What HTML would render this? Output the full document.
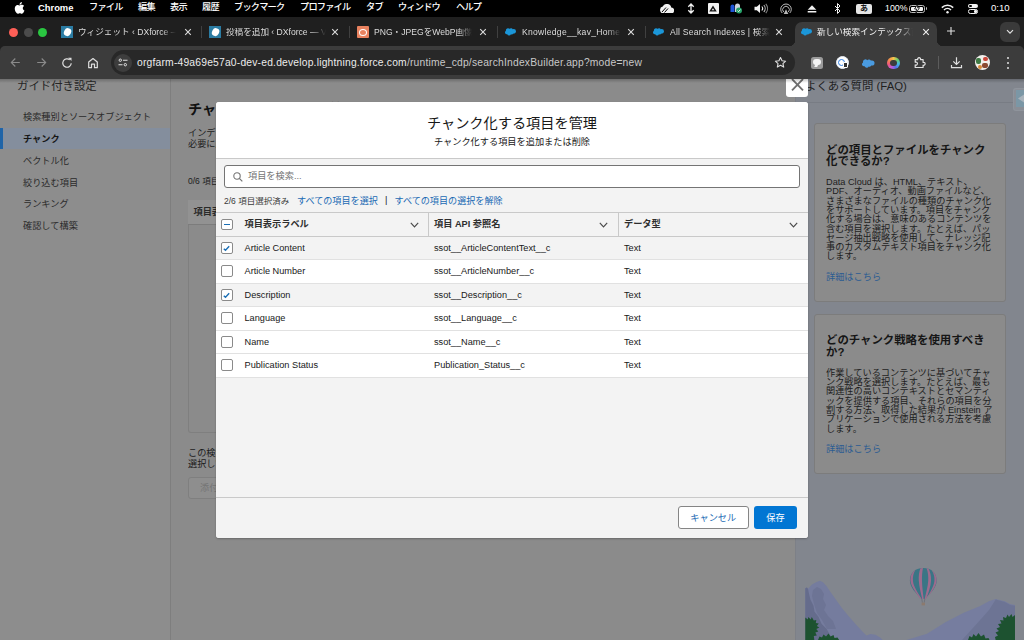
<!DOCTYPE html>
<html lang="ja">
<head>
<meta charset="utf-8">
<title>新しい検索インデックス設定</title>
<style>
*{box-sizing:border-box;margin:0;padding:0}
html,body{width:1024px;height:640px;overflow:hidden;background:#8b8b8b}
body{font-family:"Liberation Sans","Noto Sans CJK JP",sans-serif;font-size:9.2px;color:#181818;position:relative}
.abs{position:absolute}
.t{position:absolute;white-space:nowrap;line-height:1}
/* ---------- mac menu bar ---------- */
#menubar{position:absolute;left:0;top:0;width:1024px;height:17px;background:#000;color:#fff}
#menubar .t{font-size:9.2px;top:3.2px;color:#fff;letter-spacing:-0.8px;font-weight:500}
/* ---------- chrome tab strip ---------- */
#tabstrip{position:absolute;left:0;top:17px;width:1024px;height:40px;background:#1f1f1f}
#tabstrip .tt{position:absolute;top:10.700px;height:10px;-webkit-mask-image:linear-gradient(to right,#000 calc(100% - 14px),transparent);mask-image:linear-gradient(to right,#000 calc(100% - 14px),transparent);font-size:8.6px;color:#dcdcdc;white-space:nowrap;line-height:1;overflow:hidden}
#tabstrip .sep{position:absolute;top:9px;width:1px;height:12px;background:#404040}
#tabstrip .x{position:absolute;top:11px;width:8px;height:8px}
/* ---------- chrome toolbar ---------- */
#toolbar{position:absolute;left:0;top:46px;width:1024px;height:33px;background:#3c3c3c;border-radius:5px 5px 0 0}
#omni{position:absolute;left:111px;top:4px;width:684px;height:25px;border-radius:12.5px;background:#282828}
/* ---------- page ---------- */
#page{position:absolute;left:0;top:79px;width:1024px;height:561px;background:#8b8b8b;overflow:hidden}
#side{position:absolute;left:0;top:0;width:171px;height:561px;background:#8d8d8d;border-right:1px solid #7e7e7e}
#side .t{font-size:9.2px;color:#2b2b2b;left:23px}
#right{position:absolute;left:795px;top:0;width:229px;height:561px;background:#82868e;border-left:1px solid #7d8087}
.card{position:absolute;left:18px;width:192px;background:#8b8b8b;border:1px solid #7c7c7c;border-radius:3px}
.card h3{position:absolute;left:11px;font-size:11.4px;line-height:11.5px;font-weight:bold;color:#161616}
.card p{position:absolute;left:11px;font-size:9.2px;line-height:9.28px;color:#1d1d1d;white-space:nowrap}
.card a{position:absolute;left:11px;font-size:9.2px;line-height:1;color:#2c5c92;text-decoration:none}
/* ---------- modal ---------- */
#modal{position:absolute;left:216px;top:102px;width:592px;height:436px;background:#f3f3f3;border-radius:3px;overflow:hidden;box-shadow:0 1px 2px rgba(0,0,0,.25)}
#mhead{position:absolute;left:0;top:0;width:592px;height:57px;background:#fff;border-bottom:1px solid #c9c9c9}
#mfoot{position:absolute;left:0;top:394.500px;width:592px;height:41.500px;border-top:1px solid #c9c9c9;background:#f3f3f3}
.row{position:absolute;left:0;width:592px;height:23.5px;border-bottom:1px solid #e1e1e1;background:#fff}
.row.sel{background:#f3f3f3}
.row .t{top:7.300px;font-size:9.2px;color:#181818}
.cb{position:absolute;left:5.300px;top:5px;width:11.700px;height:11.700px;border:1px solid #8a8a8a;border-radius:2px;background:#fff}
</style>
</head>
<body>

<!-- ================= macOS menu bar ================= -->
<div id="menubar">
  <svg class="abs" style="left:14px;top:2px" width="11" height="12" viewBox="0 0 22 26"><path fill="#fff" d="M18.1 13.8c0-3.300 2.700-4.900 2.800-5-1.500-2.200-3.900-2.500-4.700-2.600-2-.2-3.900 1.200-4.900 1.200s-2.600-1.200-4.200-1.100c-2.200 0-4.200 1.300-5.300 3.200-2.300 3.900-.6 9.700 1.600 12.900 1.100 1.600 2.400 3.300 4.100 3.200 1.600-.1 2.300-1.100 4.200-1.100s2.500 1.100 4.300 1c1.800 0 2.900-1.600 4-3.200 1.200-1.800 1.700-3.600 1.800-3.700-.1 0-3.600-1.400-3.700-5.200zM14.800 4.100c.9-1.100 1.500-2.600 1.300-4.100-1.300.1-2.800.9-3.700 1.900-.8.900-1.500 2.400-1.300 3.900 1.400.1 2.800-.7 3.700-1.700z"/></svg>
  <span class="t" style="left:38px;font-weight:bold;letter-spacing:0;font-size:9.400px">Chrome</span>
  <span class="t" style="left:89px">ファイル</span>
  <span class="t" style="left:138px">編集</span>
  <span class="t" style="left:170px">表示</span>
  <span class="t" style="left:202px">履歴</span>
  <span class="t" style="left:234px">ブックマーク</span>
  <span class="t" style="left:300px">プロファイル</span>
  <span class="t" style="left:366px">タブ</span>
  <span class="t" style="left:398px">ウィンドウ</span>
  <span class="t" style="left:456px">ヘルプ</span>
  <span class="t" style="left:885px;top:4px;font-size:8.8px;letter-spacing:0">100%</span>
  <span class="t" style="left:991px;font-size:9.600px;letter-spacing:0;top:3.200px">0:10</span>
  <svg class="abs" style="left:658.500px;top:3.500px" width="15.500" height="9.500" viewBox="0 0 31 19"><path fill="#f2f2f2" d="M9 19a7 7 0 0 1-1.500-13.800A9 9 0 0 1 24.500 7 6 6 0 0 1 24 19z"/><path d="M6 16L14 7M11 17l7-8" stroke="#000" stroke-width="2" fill="none"/></svg>
  <svg class="abs" style="left:687px;top:3px" width="8" height="11" viewBox="0 0 8 11"><path d="M4 1.500v8M1.300 3.800L4 1l2.700 2.800M1.300 7.200L4 10l2.700-2.800" stroke="#f2f2f2" stroke-width="1.300" fill="none"/></svg>
  <div class="abs" style="left:707.500px;top:3px;width:11.500px;height:11px;background:#f2f2f2;border-radius:1px"><svg class="abs" style="left:1.700px;top:2px" width="8" height="7" viewBox="0 0 7 6"><path d="M3.500 0.300L6.800 5.700H0.200z" fill="#111"/><path d="M3.500 2.800L4.600 4.600H2.400z" fill="#f2f2f2"/></svg></div>
  <svg class="abs" style="left:730px;top:3px" width="13" height="11" viewBox="0 0 13 11"><path d="M0.500 9V3.500a2 2 0 0 1 4 0V9z" fill="#1f55d8"/><path d="M5 9V3a2.200 2.200 0 0 1 5 0v6z" fill="#cfd4dc"/><circle cx="9" cy="7.500" r="3" fill="#26a269"/><path d="M7.600 7.600l1 1 1.800-2" stroke="#fff" stroke-width=".9" fill="none"/></svg>
  <svg class="abs" style="left:753.500px;top:3px" width="15" height="11" viewBox="0 0 15 11"><path d="M0.500 3.700h2.300L6 1v9L2.800 7.300H0.500z" fill="#f2f2f2"/><path d="M7.800 3.500a3 3 0 0 1 0 4" stroke="#f2f2f2" stroke-width="1.100" fill="none"/><path d="M9.800 2a5.200 5.200 0 0 1 0 7" stroke="#bdbdbd" stroke-width="1.100" fill="none"/><path d="M11.800 0.800a7.300 7.300 0 0 1 0 9.400" stroke="#8a8a8a" stroke-width="1.100" fill="none"/></svg>
  <svg class="abs" style="left:780px;top:2.500px" width="12" height="12" viewBox="0 0 12 12"><path d="M2.200 10A5.300 5.300 0 1 1 9.800 10" stroke="#b8b8b8" stroke-width="1" fill="none"/><path d="M3.700 9A3.300 3.300 0 1 1 8.300 9" stroke="#b8b8b8" stroke-width="1" fill="none"/><path d="M6 6.200L8.300 11H3.700z" fill="#b8b8b8"/></svg>
  <svg class="abs" style="left:807px;top:4.500px" width="10" height="8" viewBox="0 0 10 8"><path d="M5 0.300L9.300 4.800H0.700z" fill="#f2f2f2"/><rect x="0.700" y="6" width="8.600" height="1.500" fill="#f2f2f2"/></svg>
  <svg class="abs" style="left:833.500px;top:3px" width="7" height="11" viewBox="0 0 7 11"><path d="M1 3l5 5-2.500 2.500V0.500L6 3 1 8" stroke="#f2f2f2" stroke-width="1" fill="none"/></svg>
  <div class="abs" style="left:856px;top:3.500px;width:16px;height:10.500px;background:#e6e6e6;border-radius:2px;color:#111;font-size:8px;line-height:10.500px;text-align:center;font-weight:bold">あ</div>
  <div class="abs" style="left:909px;top:4.500px;width:16px;height:8px;border:1px solid #bdbdbd;border-radius:2.500px"><div class="abs" style="left:1px;top:1px;width:12px;height:4px;background:#f2f2f2;border-radius:1px"></div><svg class="abs" style="left:4px;top:-1.500px" width="6" height="9" viewBox="0 0 6 9"><path d="M3.800 0L0.500 5h2L2 9l3.500-5.300h-2z" fill="#f2f2f2" stroke="#000" stroke-width=".8"/></svg></div>
  <div class="abs" style="left:925.500px;top:7px;width:1.500px;height:3px;background:#bdbdbd;border-radius:0 1px 1px 0"></div>
  <svg class="abs" style="left:940.500px;top:3.500px" width="13" height="10" viewBox="0 0 13 10"><path d="M0.800 3.600a8 8 0 0 1 11.400 0" stroke="#f2f2f2" stroke-width="1.500" fill="none"/><path d="M3 6a5 5 0 0 1 7 0" stroke="#f2f2f2" stroke-width="1.500" fill="none"/><circle cx="6.500" cy="8.300" r="1.200" fill="#f2f2f2"/></svg>
  <div class="abs" style="left:968px;top:3.500px;width:10px;height:4.500px;border-radius:2.300px;background:#f2f2f2"><div class="abs" style="left:1px;top:1px;width:2.500px;height:2.500px;border-radius:50%;background:#000"></div></div>
  <div class="abs" style="left:968px;top:9px;width:10px;height:4.500px;border-radius:2.300px;border:1px solid #f2f2f2"><div class="abs" style="left:5px;top:0;width:2.500px;height:2.500px;border-radius:50%;background:#f2f2f2"></div></div>
</div>

<!-- ================= Chrome tab strip ================= -->
<div id="tabstrip">
  <div class="abs" style="left:8.5px;top:10.500px;width:9px;height:9px;border-radius:50%;background:#fe5f57"></div><div class="abs" style="left:23.5px;top:10.500px;width:9px;height:9px;border-radius:50%;background:#4b4b4b"></div><div class="abs" style="left:37.5px;top:10.500px;width:9px;height:9px;border-radius:50%;background:#2ac641"></div>
  <div class="abs" style="left:61px;top:9px;width:12px;height:12px;background:#2b7ca3"><div class="abs" style="left:2.700px;top:1.800px;width:6.600px;height:8.400px;border-radius:50%;background:#fff;transform:rotate(28deg)"></div></div>
  <span class="tt" style="left:78px;width:98px">ウィジェット ‹ DXforce —</span>
  <svg class="x" style="left:183.5px" viewBox="0 0 8 8"><path d="M1.2 1.2L6.8 6.8M6.8 1.2L1.2 6.8" stroke="#dcdcdc" stroke-width="1.1" fill="none"/></svg>
  <div class="sep" style="left:201px"></div>
  <div class="abs" style="left:209px;top:9px;width:12px;height:12px;background:#2b7ca3"><div class="abs" style="left:2.700px;top:1.800px;width:6.600px;height:8.400px;border-radius:50%;background:#fff;transform:rotate(28deg)"></div></div>
  <span class="tt" style="left:226px;width:100px">投稿を追加 ‹ DXforce — V</span>
  <svg class="x" style="left:331px" viewBox="0 0 8 8"><path d="M1.2 1.2L6.8 6.8M6.8 1.2L1.2 6.8" stroke="#dcdcdc" stroke-width="1.1" fill="none"/></svg>
  <div class="sep" style="left:349px"></div>
  <div class="abs" style="left:357px;top:9px;width:12px;height:12px;background:#e8825f;border-radius:1px"><div class="abs" style="left:2px;top:2.5px;width:8px;height:7px;border-radius:50%;border:1.3px solid #fff"></div></div>
  <span class="tt" style="left:374px;width:98px">PNG・JPEGをWebP画像に</span>
  <svg class="x" style="left:479px" viewBox="0 0 8 8"><path d="M1.2 1.2L6.8 6.8M6.8 1.2L1.2 6.8" stroke="#dcdcdc" stroke-width="1.1" fill="none"/></svg>
  <div class="sep" style="left:497px"></div>
  <svg class="abs" style="left:505.0px;top:11.200px" width="11" height="7.600" viewBox="0 0 26 18"><path fill="#1b96d8" d="M10.800 2.000a4.700 4.700 0 0 1 7.500 1.000 5.700 5.700 0 0 1 2.300-.5 5.400 5.400 0 0 1 0 10.900 5.000 5.000 0 0 1-1.100-.1 4.100 4.100 0 0 1-5.400 1.700 4.800 4.800 0 0 1-8.800-.2 4.300 4.300 0 0 1-.9.1A4.400 4.400 0 0 1 2.200 6.700 5.100 5.100 0 0 1 10.800 2.000z"/></svg>
  <span class="tt" style="left:522px;width:99px;letter-spacing:.27px">Knowledge__kav_Home |</span>
  <svg class="x" style="left:627px" viewBox="0 0 8 8"><path d="M1.2 1.2L6.8 6.8M6.8 1.2L1.2 6.8" stroke="#dcdcdc" stroke-width="1.1" fill="none"/></svg>
  <div class="sep" style="left:645px"></div>
  <svg class="abs" style="left:653.0px;top:11.200px" width="11" height="7.600" viewBox="0 0 26 18"><path fill="#1b96d8" d="M10.800 2.000a4.700 4.700 0 0 1 7.500 1.000 5.700 5.700 0 0 1 2.300-.5 5.400 5.400 0 0 1 0 10.900 5.000 5.000 0 0 1-1.100-.1 4.100 4.100 0 0 1-5.400 1.700 4.800 4.800 0 0 1-8.800-.2 4.300 4.300 0 0 1-.9.1A4.400 4.400 0 0 1 2.200 6.700 5.100 5.100 0 0 1 10.800 2.000z"/></svg>
  <span class="tt" style="left:670px;width:100px;letter-spacing:.2px">All Search Indexes | 検索</span>
  <svg class="x" style="left:775px" viewBox="0 0 8 8"><path d="M1.2 1.2L6.8 6.8M6.8 1.2L1.2 6.8" stroke="#dcdcdc" stroke-width="1.1" fill="none"/></svg>
  <div class="abs" style="left:794.500px;top:5px;width:142.500px;height:24px;background:#3c3c3c;border-radius:7px 7px 0 0"></div>
  <div class="abs" style="left:788.500px;top:23px;width:6px;height:6px;background:radial-gradient(circle at 0 0,transparent 6px,#3c3c3c 6.5px)"></div>
  <div class="abs" style="left:937px;top:23px;width:6px;height:6px;background:radial-gradient(circle at 100% 0,transparent 6px,#3c3c3c 6.5px)"></div>
  <svg class="abs" style="left:801.0px;top:11.200px" width="11" height="7.600" viewBox="0 0 26 18"><path fill="#1b96d8" d="M10.800 2.000a4.700 4.700 0 0 1 7.500 1.000 5.700 5.700 0 0 1 2.300-.5 5.400 5.400 0 0 1 0 10.900 5.000 5.000 0 0 1-1.100-.1 4.100 4.100 0 0 1-5.400 1.700 4.800 4.800 0 0 1-8.800-.2 4.300 4.300 0 0 1-.9.1A4.400 4.400 0 0 1 2.200 6.700 5.100 5.100 0 0 1 10.800 2.000z"/></svg>
  <span class="tt" style="left:817px;width:96px;color:#f0f0f0">新しい検索インデックス設定</span>
  <svg class="x" style="left:922px" viewBox="0 0 8 8"><path d="M1.2 1.2L6.8 6.8M6.8 1.2L1.2 6.8" stroke="#f0f0f0" stroke-width="1.1" fill="none"/></svg>
  <svg class="abs" style="left:946px;top:9px" width="10" height="10" viewBox="0 0 10 10"><path d="M5 1v8M1 5h8" stroke="#e0e0e0" stroke-width="1.1"/></svg>
  <div class="abs" style="left:1000px;top:5px;width:20px;height:20px;border-radius:6px;background:#3a3a3a"><svg class="abs" style="left:6px;top:7px" width="8" height="6" viewBox="0 0 8 6"><path d="M1 1.2L4 4.200 7 1.2" stroke="#e0e0e0" stroke-width="1.2" fill="none"/></svg></div>
</div>

<!-- ================= Chrome toolbar ================= -->
<div id="toolbar">
  <svg class="abs" style="left:10px;top:11px" width="11" height="11" viewBox="0 0 11 11"><path d="M9.800 5.500H1.500M5.300 1.500L1.300 5.500l4 4" stroke="#8a8a8a" stroke-width="1.1" fill="none"/></svg>
  <svg class="abs" style="left:36px;top:11px" width="11" height="11" viewBox="0 0 11 11"><path d="M1.200 5.500H9.500M5.700 1.500L9.700 5.500l-4 4" stroke="#8a8a8a" stroke-width="1.1" fill="none"/></svg>
  <svg class="abs" style="left:61px;top:10.5px" width="12" height="12" viewBox="0 0 12 12"><path d="M10.200 6.200A4.200 4.200 0 1 1 8.800 2.900" stroke="#dedede" stroke-width="1.2" fill="none"/><path d="M7.200 0.800h3.300v3.300z" fill="#dedede"/></svg>
  <svg class="abs" style="left:86.500px;top:10.500px" width="12" height="12" viewBox="0 0 12 12"><path d="M1.700 10.700V5.000L6 1.500l4.300 3.500v5.700H7.500V7.100h-3v3.600z" stroke="#dedede" stroke-width="1.2" fill="none" stroke-linejoin="round"/></svg>
  <div id="omni"><div class="abs" style="left:2.500px;top:3.500px;width:18px;height:18px;border-radius:50%;background:#3d3d3d"></div><svg class="abs" style="left:6.500px;top:8px" width="10" height="9" viewBox="0 0 10 9"><circle cx="2.300" cy="2.200" r="1.200" stroke="#e3e3e3" stroke-width="1" fill="none"/><path d="M5 2.200h4.500M0.500 6.700h4" stroke="#e3e3e3" stroke-width="1.100"/><circle cx="7.300" cy="6.700" r="1.200" stroke="#e3e3e3" stroke-width="1" fill="none"/></svg><span class="t" style="left:26px;top:8.200px;font-size:10.300px;letter-spacing:.2px;color:#ececec">orgfarm-49a69e57a0-dev-ed.develop.lightning.force.com<span style="color:#c9c9c9">/runtime_cdp/searchIndexBuilder.app?mode=new</span></span><svg class="abs" style="left:663px;top:6px" width="13" height="13" viewBox="0 0 13 13"><path d="M6.500 1.500l1.550 3.300 3.550.4-2.650 2.400.75 3.500-3.200-1.800-3.200 1.800.75-3.500L1.400 5.200l3.550-.4z" stroke="#e0e0e0" stroke-width="1.100" fill="none" stroke-linejoin="round"/></svg></div>
  <div class="abs" style="left:810.500px;top:10.500px;width:12px;height:12px;border-radius:2.500px;background:#9b9b9b"><div class="abs" style="left:2px;top:2.500px;width:8px;height:6px;border-radius:3px;background:#f4f4f4"></div><div class="abs" style="left:4px;top:7.500px;width:2.500px;height:2.500px;background:#f4f4f4;transform:skewX(-25deg)"></div></div>
  <div class="abs" style="left:835.500px;top:10px;width:13px;height:13px;border-radius:50%;background:#fff;border:1.500px solid #e9eef5"><div class="abs" style="left:1.500px;top:1.500px;width:7px;height:7px;border-radius:50%;border:1.800px solid #2f7de1"></div><div class="abs" style="left:6px;top:5px;width:5px;height:6px;background:#333;border-radius:1px;border:1px solid #fff"></div></div>
  <svg class="abs" style="left:862px;top:12.500px" width="12.500" height="9" viewBox="0 0 26 18"><path fill="#4a9be0" d="M10.800 2.000a4.700 4.700 0 0 1 7.500 1.000 5.700 5.700 0 0 1 2.300-.5 5.400 5.400 0 0 1 0 10.900 5.000 5.000 0 0 1-1.100-.1 4.100 4.100 0 0 1-5.400 1.700 4.800 4.800 0 0 1-8.800-.2 4.300 4.300 0 0 1-.9.1A4.400 4.400 0 0 1 2.200 6.700 5.100 5.100 0 0 1 10.800 2.000z"/></svg>
  <div class="abs" style="left:887px;top:10.500px;width:12.500px;height:12.500px;border-radius:50%;background:conic-gradient(#f5c34a,#6ccf6e,#3fb6e8,#5a6fe8,#c55ad8,#f0587a,#f5914a,#f5c34a)"><div class="abs" style="left:3px;top:3px;width:6.500px;height:6.500px;border-radius:50%;background:#3c3c3c"></div></div>
  <svg class="abs" style="left:913px;top:9.500px" width="13" height="13" viewBox="0 0 13 13"><path d="M2.200 3.700h2.500a1.500 1.500 0 1 1 2.800 0h2.600v2.700a1.500 1.500 0 1 1 0 2.800v2.300H2.200V8.900a1.500 1.500 0 1 0 0-2.600z" stroke="#e0e0e0" stroke-width="1.200" fill="none" stroke-linejoin="round"/></svg>
  <div class="abs" style="left:938px;top:10px;width:1px;height:13px;background:#5c5c5c"></div>
  <svg class="abs" style="left:950px;top:10px" width="13" height="13" viewBox="0 0 13 13"><path d="M6.500 1.200v7M3.300 5.400l3.200 3.100 3.200-3.100M1.500 9v2.600h10V9" stroke="#e0e0e0" stroke-width="1.200" fill="none"/></svg>
  <div class="abs" style="left:975px;top:9px;width:15px;height:15px;border-radius:50%;background:#f2f0ec;overflow:hidden"><div class="abs" style="left:1px;top:3px;width:5px;height:6px;background:#3f7a45;border-radius:2px"></div><div class="abs" style="left:8px;top:2px;width:5px;height:4px;background:#c9463a;border-radius:2px"></div><div class="abs" style="left:7px;top:8px;width:6px;height:5px;background:#8a4a32;border-radius:2px"></div><div class="abs" style="left:3px;top:10px;width:4px;height:4px;background:#d88a3a;border-radius:2px"></div></div>
  <div class="abs" style="left:1007px;top:10.500px;width:2px;height:2px;border-radius:50%;background:#e0e0e0;box-shadow:0 5px 0 #e0e0e0,0 10px 0 #e0e0e0"></div>
</div>

<!-- ================= Page ================= -->
<div id="page">
  <div class="abs" style="left:0;top:0;width:1024px;height:4px;background:linear-gradient(rgba(0,0,0,.22),rgba(0,0,0,0));z-index:5"></div>
  <div id="side">
    <span class="t" style="left:17px;top:2.400px;font-size:11.400px;color:#262626">ガイド付き設定</span>
    <div class="abs" style="left:0;top:49px;width:170px;height:21px;background:#848e9d"></div>
    <div class="abs" style="left:0;top:49px;width:3px;height:21px;background:#1f64a8"></div>
    <span class="t" style="top:34.00px">検索種別とソースオブジェクト</span>
    <span class="t" style="top:55.85px;font-weight:bold;color:#161616">チャンク</span>
    <span class="t" style="top:77.70px">ベクトル化</span>
    <span class="t" style="top:99.55px">絞り込む項目</span>
    <span class="t" style="top:121.40px">ランキング</span>
    <span class="t" style="top:143.25px">確認して構築</span>
  </div>
  <div id="main">
    <span class="t" style="left:188px;top:22.500px;font-size:14.200px;font-weight:bold;color:#121212">チャンク化する項目を管理</span>
    <span class="t" style="left:188px;top:49.500px;color:#1c1c1c">インデックスに含める項目とファイルを選択します。</span>
    <span class="t" style="left:188px;top:61px;color:#1c1c1c">必要に応じてチャンク戦略を設定してください。</span>
    <span class="t" style="left:188px;top:98px;font-size:8.500px;color:#1c1c1c">0/6 項目選択済み</span>
    <div class="abs" style="left:188px;top:121px;width:600px;height:25px;background:#929292;border-bottom:1.500px solid #7c7c7c"></div>
    <span class="t" style="left:193.500px;top:129px;font-weight:bold;color:#2a2a2a">項目表示ラベル</span>
    <div class="abs" style="left:188px;top:146px;width:600px;height:208px;border:1px solid #7f7f7f;border-top:none;border-radius:0 0 3px 3px"></div>
    <span class="t" style="left:188px;top:369.500px;color:#1c1c1c">この検索インデックスに含めるファイルを</span>
    <span class="t" style="left:188px;top:380.800px;color:#1c1c1c">選択してください。</span>
    <div class="abs" style="left:188px;top:398px;width:80px;height:22px;border:1px solid #7f7f7f;border-radius:3px;background:#8e8e8e"></div>
    <span class="t" style="left:200px;top:404.500px;color:#757575">添付ファイルを選択</span>
  </div>
  <div id="right">
    <div class="abs" style="left:0;top:23px;width:228px;height:1px;background:#787c84"></div>
    <span class="t" style="left:9px;top:2.200px;font-size:11.400px;color:#1f1f1f">よくある質問 (FAQ)</span>
    <div class="abs" style="left:217px;top:9px;width:11px;height:23px;background:#8a8e96;border:1px solid #8f949c;border-right:none;border-radius:3px 0 0 3px"></div>
    <div class="abs" style="left:220px;top:11px;width:8px;height:17px;background:#7b97a6"></div>
    <svg class="abs" style="left:221px;top:15px" width="7" height="9" viewBox="0 0 7 9"><path d="M7 0.500v8L1 4.500z" fill="#a9b3bc"/></svg>
<svg class="abs" style="left:0;top:471px" width="228" height="90" viewBox="796 550 228 90">
      <path d="M805.300 640V588.300l1.500-.8 1.200 1.200 4-4.200 4.500-2.600 3.500-1.200 3 1.600 3.500 3.700 4 6 5 7 6 8.500 7 8.500 7 8 6 6.500 5 5 4-1.500 5 .8 5 3 6 5.700z" fill="#757c9e"/>
      <path d="M805.300 640V588.300l1.500-.8 1.200 1.200 1 5 1.500 6 3 6 1 6 4 5 3 7 5 5 4 7 3 4.300z" fill="#656c8c"/>
      <path d="M813 590l4-3 4 2 3 5-1 5 3 6-2 5 4 6 5 5 3 8h-9l-5-9-5-7-3-9-2-8z" fill="#6b7292" opacity=".8"/>
      <path d="M906.500 640L927 633.700 945.400 622.300 963.700 612.700 979.700 606.300 988.800 601.200 995.700 599 1004.800 601.200 1010 604 1015 605V640z" fill="#767d9f"/>
      <path d="M962 640l10-11 9-10 8-9 6.700-10.500 9 2.500 5.500 3 4.800 .8V640z" fill="#697090" opacity=".7"/>
      <g fill="#1d5230">
        <path d="M805.300 640v-22.500l2.500 2 .5-2.500 2.500 2.500 1-2.500 2 3.500 2.500-.5-.5 3 3 .5-2 2.500 2.500 1.500-3 1.500 2 2.500-3 1 1.500 3-3 .5.5 4z"/>
        <path d="M818 640l1.500-3.500 2.500 1 1.500-3 2.500 2 2.500-3 2 3 3-1.500 1 3 3-.5 2 3 3 .5.500 3z"/>
        <path d="M1015 640v-25l-2.500 2-1-3-2.500 3-1.500-2.500-1.500 3.500-3-1 .5 3.500-3.500-.5 1.500 3.500-3.500.5 2 3-3.500 1.500 2.500 2.500-3.500 1.500 2.500 3-3 1.500 1 4.500z"/>
        <path d="M968 640l1.500-4 2.500 1.500 1.500-3.500 2.500 2.500 2.500-3.500 2.500 3.500 3-2 1.500 4 3-.5 1 2z"/>
      </g>
      <g>
        <path d="M923.300 568c8.500 0 13.400 5.500 13.400 12.500 0 7-6 12.500-11.800 18.500h-3.200c-5.800-6-11.800-11.500-11.800-18.500 0-7 4.900-12.500 13.400-12.500z" fill="#3a7585"/>
        <path d="M915.500 569.800c-2 3-3 7-2.500 11.500.500 5 4.500 11 8.500 17.500l-1.300 0c-4-6-9-12-9.700-17.500-.5-5 1.500-9 5-11.500z" fill="#9d6b8d"/>
        <path d="M920.500 568.200c-1.500 3.500-2 8-1.700 12.500.3 5.500 2 12 3.400 18.300h1.500c-.8-6-1.600-12.500-1.700-18.300-.1-4.500.2-9 1-12.600z" fill="#9d6b8d"/>
        <path d="M926.500 568.300c1.500 3.500 2 8 1.700 12.500-.3 5.500-2 12-3.600 18.200h1.400c2.500-6 4.700-12.500 5-18.200.3-5-1-9.500-2.500-12z" fill="#9d6b8d"/>
        <path d="M931.800 570.500c2 3 3 6.500 2.600 10.500-.5 5-4 11-8 17.500 5-6 9.800-12 10.200-18 .3-4.500-2-8-4.800-10z" fill="#9d6b8d"/>
        <path d="M921.800 599l.6 3.700M924.800 599l-.6 3.700" stroke="#5d5f66" stroke-width=".5"/>
        <rect x="921.600" y="602.600" width="3.400" height="2.800" fill="#8c7a6e"/>
      </g>
    </svg>
    <div class="card" style="top:44px;height:178.500px">
      <h3 style="top:20.600px">どの項目とファイルをチャンク<br>化できるか?</h3>
      <p style="top:54.200px">Data Cloud は、HTML、テキスト、<br>PDF、オーディオ、動画ファイルなど、<br>さまざまなファイルの種類のチャンク化<br>をサポートしています。項目をチャンク<br>化する場合は、意味のあるコンテンツを<br>含む項目を選択します。たとえば、パッ<br>セージ抽出戦略を使用して、ナレッジ記<br>事のカスタムテキスト項目をチャンク化<br>します。</p>
      <a style="top:149px">詳細はこちら</a>
    </div>
    <div class="card" style="top:234.700px;height:160.800px">
      <h3 style="top:20.600px">どのチャンク戦略を使用すべき<br>か?</h3>
      <p style="top:54.200px">作業しているコンテンツに基づいてチャ<br>ンク戦略を選択します。たとえば、最も<br>関連性の高いコンテキストとセマンティ<br>ックを提供する項目、それらの項目を分<br>割する方法、取得した結果が Einstein ア<br>プリケーションで使用される方法を考慮<br>します。</p>
      <a style="top:130.300px">詳細はこちら</a>
    </div>
  </div>
  <div class="abs" style="left:785.500px;top:-6px;width:22.500px;height:23.500px;background:#fff;border-radius:3px"></div>
  <svg class="abs" style="left:790.500px;top:0" width="13" height="12" viewBox="0 0 13 12"><path d="M1 0L12 11.300M12 0L1 11.300" stroke="#6f6f6f" stroke-width="1.800" fill="none"/></svg>
</div>

<!-- ================= Modal ================= -->
<div id="modal">
  <div id="mhead"><span class="t" style="left:0;width:592px;text-align:center;top:13.800px;font-size:14.200px;color:#181818">チャンク化する項目を管理</span><span class="t" style="left:0;width:592px;text-align:center;top:36px;font-size:9.200px;color:#181818">チャンク化する項目を追加または削除</span></div>
  <div class="abs" style="left:8px;top:63px;width:576px;height:23px;background:#fff;border:1px solid #747474;border-radius:3px"></div>
  <svg class="abs" style="left:17px;top:69.500px" width="10" height="10" viewBox="0 0 10 10"><circle cx="4" cy="4" r="3.200" stroke="#747474" stroke-width="1.100" fill="none"/><path d="M6.300 6.300L9.300 9.300" stroke="#747474" stroke-width="1.200"/></svg>
  <span class="t" style="left:32px;top:70px;color:#747474">項目を検索...</span>
  <span class="t" style="left:8px;top:94.800px;font-size:8.500px;color:#3a3a3a">2/6 項目選択済み</span>
  <span class="t" style="left:81px;top:94.600px;font-size:9.100px;color:#1a6ab4">すべての項目を選択</span>
  <span class="t" style="left:169px;top:94px;color:#181818">|</span>
  <span class="t" style="left:178.500px;top:94.600px;font-size:9.100px;color:#1a6ab4">すべての項目の選択を解除</span>
  <div class="abs" style="left:0;top:110px;width:592px;height:25px;background:#f3f3f3;border-top:1px solid #c9c9c9;border-bottom:1px solid #c9c9c9"><div class="cb" style="left:5.300px;top:5.500px"><div class="abs" style="left:1.700px;top:4px;width:6.300px;height:1.800px;background:#1b6fb5"></div></div><span class="t" style="left:28.500px;top:7px;font-weight:bold;color:#2e2e2e">項目表示ラベル</span><svg class="abs" style="left:194px;top:9px" width="9" height="6" viewBox="0 0 9 6"><path d="M0.800 0.800L4.500 4.800 8.200 0.800" stroke="#4a4a4a" stroke-width="1.150" fill="none"/></svg><div class="abs" style="left:211.500px;top:0;width:1px;height:23px;background:#c9c9c9"></div><span class="t" style="left:218px;top:7px;font-weight:bold;color:#2e2e2e">項目 API 参照名</span><svg class="abs" style="left:383px;top:9px" width="9" height="6" viewBox="0 0 9 6"><path d="M0.800 0.800L4.500 4.800 8.200 0.800" stroke="#4a4a4a" stroke-width="1.150" fill="none"/></svg><div class="abs" style="left:401.500px;top:0;width:1px;height:23px;background:#c9c9c9"></div><span class="t" style="left:408px;top:7px;font-weight:bold;color:#2e2e2e">データ型</span><svg class="abs" style="left:573px;top:9px" width="9" height="6" viewBox="0 0 9 6"><path d="M0.800 0.800L4.500 4.800 8.200 0.800" stroke="#4a4a4a" stroke-width="1.150" fill="none"/></svg></div>
  <div class="row sel" style="top:135px;height:23px"><div class="cb"><svg class="abs" style="left:0;top:0" width="10" height="10" viewBox="0 0 10 10"><path d="M1.800 5.700L3.500 7.300 7.200 3.300" stroke="#1b6fb5" stroke-width="1.400" fill="none"/></svg></div><span class="t" style="left:28.500px">Article Content</span><span class="t" style="left:218px">ssot__ArticleContentText__c</span><span class="t" style="left:408px">Text</span></div>
  <div class="row" style="top:158px;height:24px"><div class="cb"></div><span class="t" style="left:28.500px">Article Number</span><span class="t" style="left:218px">ssot__ArticleNumber__c</span><span class="t" style="left:408px">Text</span></div>
  <div class="row sel" style="top:182px;height:23px"><div class="cb"><svg class="abs" style="left:0;top:0" width="10" height="10" viewBox="0 0 10 10"><path d="M1.800 5.700L3.500 7.300 7.200 3.300" stroke="#1b6fb5" stroke-width="1.400" fill="none"/></svg></div><span class="t" style="left:28.500px">Description</span><span class="t" style="left:218px">ssot__Description__c</span><span class="t" style="left:408px">Text</span></div>
  <div class="row" style="top:205px;height:24px"><div class="cb"></div><span class="t" style="left:28.500px">Language</span><span class="t" style="left:218px">ssot__Language__c</span><span class="t" style="left:408px">Text</span></div>
  <div class="row" style="top:229px;height:23px"><div class="cb"></div><span class="t" style="left:28.500px">Name</span><span class="t" style="left:218px">ssot__Name__c</span><span class="t" style="left:408px">Text</span></div>
  <div class="row" style="top:252px;height:24px"><div class="cb"></div><span class="t" style="left:28.500px">Publication Status</span><span class="t" style="left:218px">Publication_Status__c</span><span class="t" style="left:408px">Text</span></div>
  <div id="mfoot"><div class="abs" style="left:462px;top:8.500px;width:70.500px;height:23px;background:#fff;border:1px solid #858585;border-radius:3px"></div><span class="t" style="left:462px;width:70.500px;text-align:center;top:16.200px;color:#1a6ab4">キャンセル</span><div class="abs" style="left:538px;top:8.500px;width:43px;height:23px;background:#0176d3;border-radius:3px"></div><span class="t" style="left:538px;width:43px;text-align:center;top:16.200px;color:#fff">保存</span></div>
</div>

</body>
</html>
